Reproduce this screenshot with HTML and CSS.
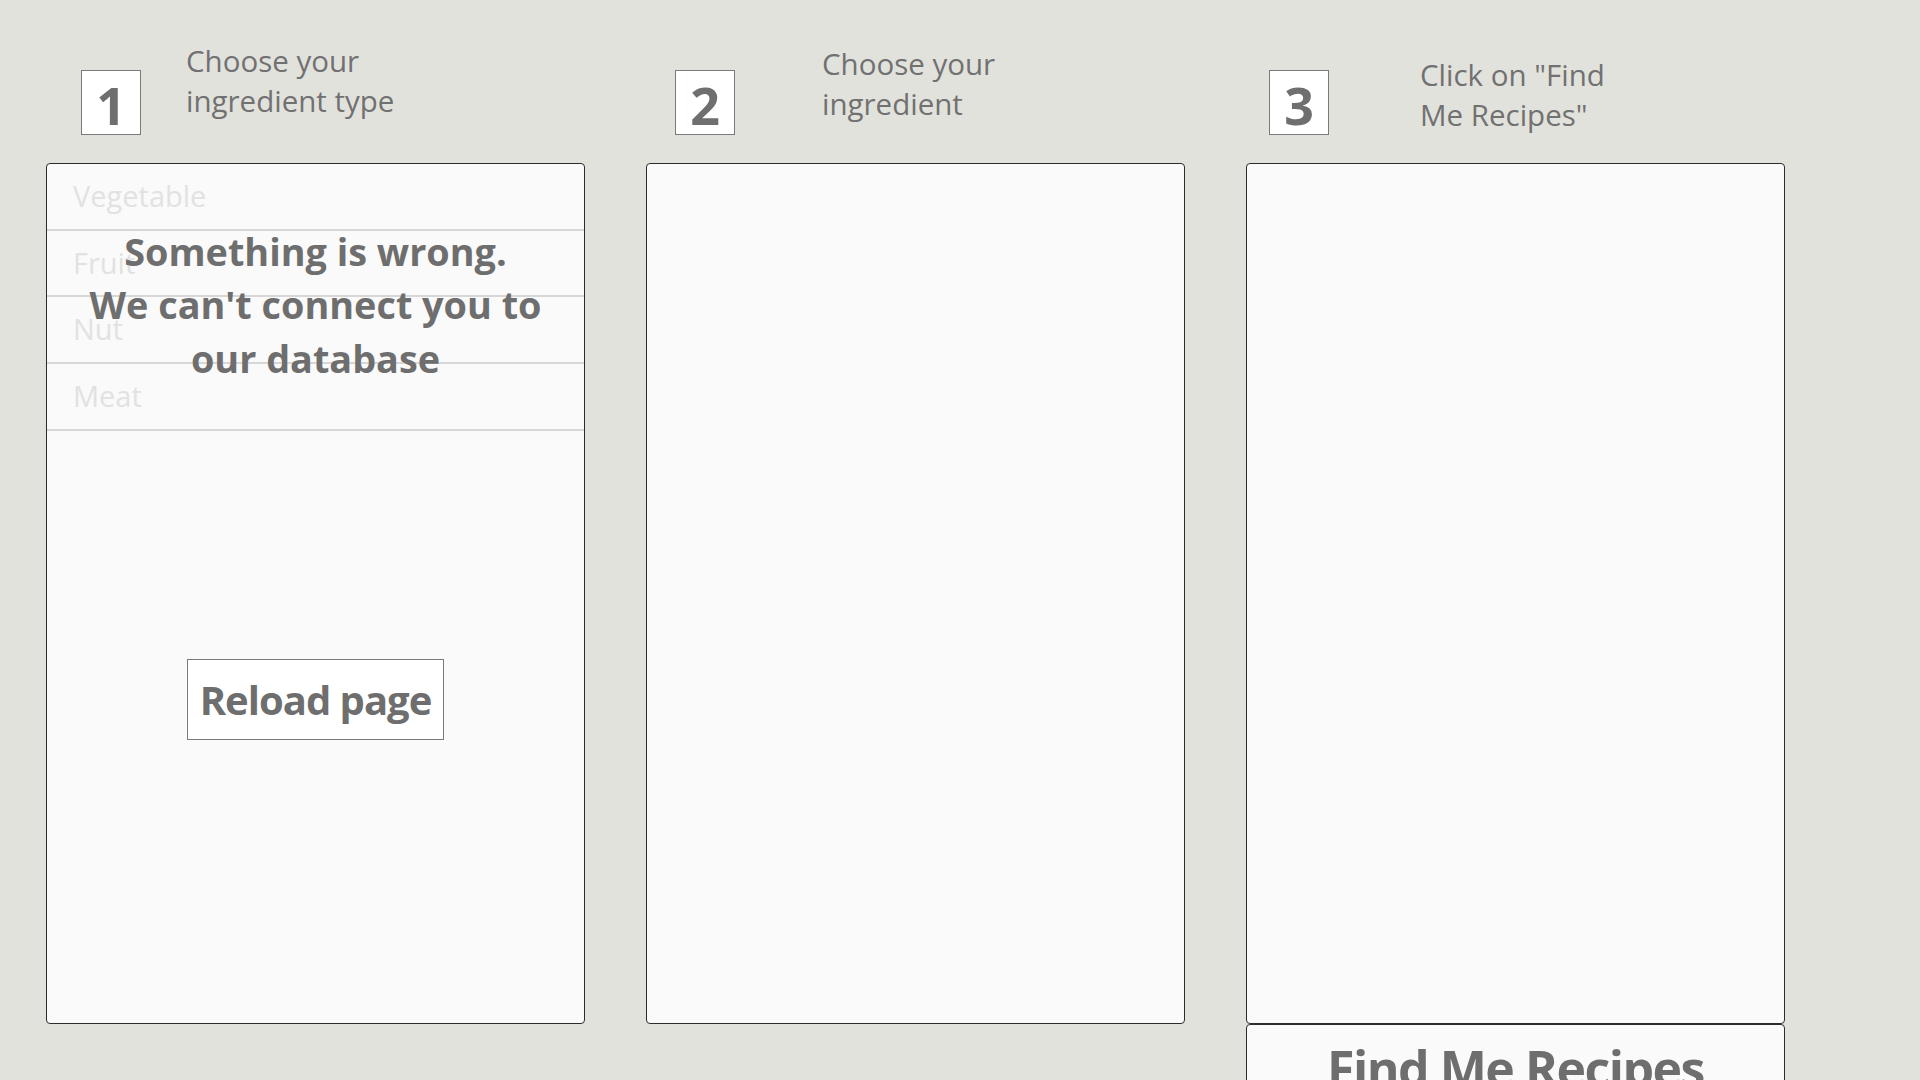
FILE: index.html
```html
<!DOCTYPE html>
<html lang="en">
<head>
<meta charset="utf-8">
<title>Find Me Recipes</title>
<link rel="stylesheet" href="styles.css">
</head>
<body>
<main class="steps">
  <section class="step step-1">
    <header class="step-head">
      <div class="num">1</div>
      <p class="step-text">Choose your<br>ingredient type</p>
    </header>
    <div class="panel">
      <ul class="types">
        <li class="type-row">Vegetable</li>
        <li class="type-row">Fruit</li>
        <li class="type-row">Nut</li>
        <li class="type-row">Meat</li>
      </ul>
      <div class="error">
        <p class="error-text">Something is wrong.<br>We can't connect you to<br>our database</p>
        <button class="reload" type="button">Reload page</button>
      </div>
    </div>
  </section>
  <section class="step step-2">
    <header class="step-head">
      <div class="num">2</div>
      <p class="step-text">Choose your<br>ingredient</p>
    </header>
    <div class="panel"></div>
  </section>
  <section class="step step-3">
    <header class="step-head">
      <div class="num">3</div>
      <p class="step-text">Click on "Find<br>Me Recipes"</p>
    </header>
    <div class="panel"></div>
    <button class="find" type="button">Find Me Recipes</button>
  </section>
</main>
</body>
</html>
```
FILE: styles.css
```css
html, body {
  margin: 0;
  padding: 0;
  height: 100%;
  overflow: hidden;
}
body {
  background: #e2e2dd;
  font-family: "Open Sans", "Noto Sans", sans-serif;
  color: #707070;
}
.steps {
  display: flex;
  gap: 61px;
  padding-left: 46px;
}
.step {
  width: 539px;
  display: flex;
  flex-direction: column;
  flex: none;
}
.step-head {
  height: 163px;
  display: flex;
  align-items: flex-start;
}
.num {
  box-sizing: border-box;
  width: 60px;
  height: 65px;
  margin-top: 70px;
  border: 1px solid #7a7a7a;
  background: #ffffff;
  font-weight: 700;
  font-size: 52px;
  line-height: 63px;
  padding-top: 2px;
  text-align: center;
  color: #6f6f6f;
  flex: none;
}
.step-text {
  margin: 0;
  font-size: 29.5px;
  line-height: 39.5px;
  color: #717171;
}
.step-1 .num { margin-left: 35px; }
.step-1 .step-text { margin-left: 45px; margin-top: 41px; }
.step-2 .num { margin-left: 29px; }
.step-2 .step-text { margin-left: 87px; margin-top: 44px; }
.step-3 .num { margin-left: 23px; }
.step-3 .step-text { margin-left: 91px; margin-top: 55px; }

.panel {
  position: relative;
  box-sizing: border-box;
  height: 861px;
  border: 1px solid #2c2c2c;
  border-radius: 4px;
  background: #fafafa;
  flex: none;
}
.types {
  list-style: none;
  margin: 0;
  padding: 0;
}
.type-row {
  height: 64.7px;
  border-bottom: 2px solid #d7d7d7;
  padding-left: 26px;
  font-size: 29px;
  line-height: 64.7px;
  color: #e2e2e2;
}
.error {
  position: absolute;
  inset: 0;
  display: flex;
  flex-direction: column;
  align-items: center;
  padding-top: 61px;
}
.error-text {
  margin: 0;
  font-size: 37.8px;
  font-weight: 700;
  line-height: 53.3px;
  text-align: center;
  color: #6e6e6e;
}
.reload {
  margin-top: 274px;
  box-sizing: border-box;
  width: 257px;
  height: 81px;
  padding: 0;
  border: 1px solid #7a7a7a;
  border-radius: 0;
  background: #ffffff;
  font-family: "Open Sans", "Noto Sans", sans-serif;
  font-size: 40px;
  letter-spacing: -1px;
  font-weight: 700;
  color: #6e6e6e;
}
.find {
  display: block;
  width: 100%;
  box-sizing: border-box;
  padding: 9px 0 40px;
  border: 1px solid #2c2c2c;
  border-radius: 4px;
  background: #fafafa;
  font-family: "Open Sans", "Noto Sans", sans-serif;
  font-size: 50px;
  font-weight: 700;
  letter-spacing: -1.5px;
  line-height: normal;
  color: #6e6e6e;
  text-align: center;
}
```
